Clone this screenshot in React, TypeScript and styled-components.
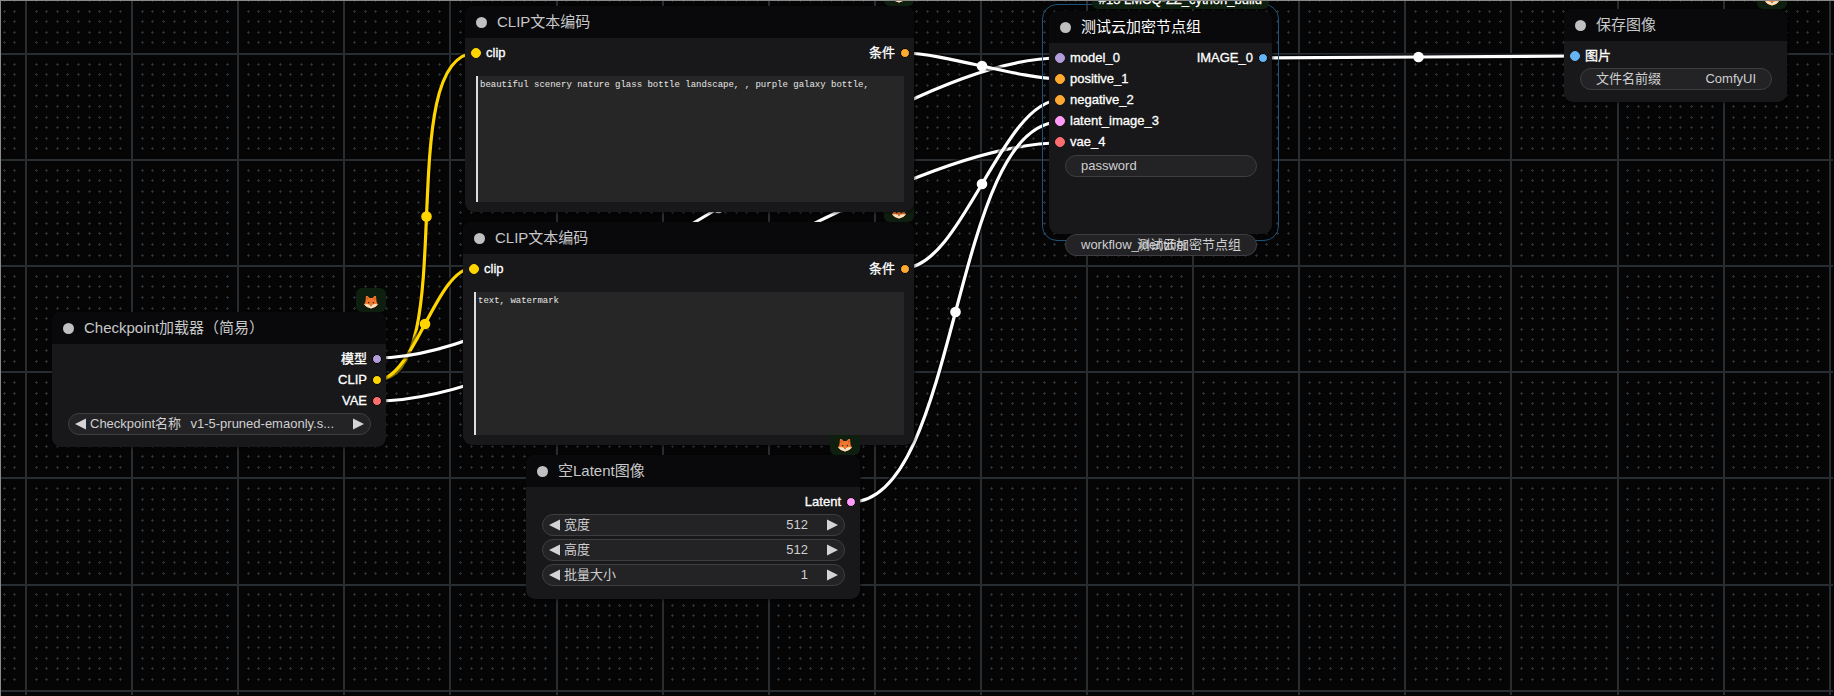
import React from 'react';
import styled, { createGlobalStyle } from 'styled-components';

const GlobalStyle = createGlobalStyle`
  * { box-sizing: border-box; }
  html, body, #root { height: 100%; margin: 0; }
  body {
    background: #050505;
    font-family: "Liberation Sans", "Noto Sans CJK SC", sans-serif;
    overflow: hidden;
  }
`;

const Canvas = styled.main`
  position: relative;
  width: 100%;
  min-height: 100vh;
  overflow: hidden;
  border-top: 1px solid #8a8a8a;
  border-left: 1px solid #8a8a8a;
`;

const Stage = styled.div`
  position: absolute;
  top: -1px;
  left: -1px;
`;

const Backdrop = styled.svg`
  position: absolute;
  top: -1px;
  left: -1px;
  width: 100%;
  height: 100%;
  box-sizing: content-box;
`;

const NodeFrame = styled.section<{ $x: number; $y: number; $w: number; $h: number }>`
  position: absolute;
  left: ${(p) => p.$x}px;
  top: ${(p) => p.$y}px;
  width: ${(p) => p.$w}px;
  height: ${(p) => p.$h}px;
  display: flex;
  flex-direction: column;
  border-radius: 9px;
  background: #18181a;
  box-shadow: 1px 1px 3px rgba(0, 0, 0, 0.6);
`;

const SelectionRing = styled.div`
  position: absolute;
  inset: -7px;
  border: 1px solid #1d5277;
  border-radius: 15px;
  pointer-events: none;
`;

const TitleBar = styled.header`
  position: relative;
  flex: none;
  height: 32px;
  display: flex;
  align-items: center;
  gap: 10px;
  padding-left: 11px;
  border-radius: 9px 9px 0 0;
  background: #09090b;
`;

const StateDot = styled.span`
  width: 11px;
  height: 11px;
  border-radius: 50%;
  background: #c0c0c0;
`;

const Title = styled.h2<{ $selected?: boolean }>`
  margin: 0;
  font-size: 15px;
  line-height: 20px;
  font-weight: 400;
  white-space: nowrap;
  color: ${(p) => (p.$selected ? '#ffffff' : '#c8c8ca')};
`;

const Badge = styled.span`
  position: absolute;
  right: 0;
  bottom: 100%;
  height: 24px;
  min-width: 30px;
  display: flex;
  align-items: center;
  justify-content: center;
  padding-top: 3px;
  border-radius: 6px;
  background: #0f1f0f;
`;

const BadgeText = styled(Badge)`
  right: 3px;
  bottom: 34px;
  padding: 6px 7px 0;
  font-size: 13px;
  line-height: 16px;
  white-space: nowrap;
  color: #ffffff;
  -webkit-text-stroke: 0.3px #ffffff;
`;

const Slots = styled.div`
  display: flex;
  justify-content: space-between;
  padding: 4px 4px 0 6px;
`;

const SlotColumn = styled.ul`
  margin: 0;
  padding: 0;
  list-style: none;
`;

const Slot = styled.li<{ $output?: boolean }>`
  height: 21px;
  display: flex;
  flex-direction: ${(p) => (p.$output ? 'row-reverse' : 'row')};
  align-items: center;
  gap: 5px;
  font-size: 13px;
  line-height: 16px;
  color: #ffffff;
  -webkit-text-stroke: 0.3px #ffffff;
  white-space: nowrap;
`;

const SlotDot = styled.span<{ $color: string; $output?: boolean }>`
  width: 10px;
  height: 10px;
  border: 1px solid ${(p) => (p.$output ? '#000000' : p.$color)};
  border-radius: 50%;
  background: ${(p) => p.$color};
`;

const Widgets = styled.div<{ $offset: number }>`
  display: flex;
  flex-direction: column;
  gap: 3px;
  padding: ${(p) => p.$offset}px 15px 0 16px;
`;

const Pill = styled.div<{ $tight?: boolean }>`
  position: relative;
  flex: none;
  height: 22px;
  display: flex;
  align-items: center;
  padding: 0 ${(p) => (p.$tight ? 6 : 15)}px;
  border: 1px solid #3d3d42;
  border-radius: 11px;
  background: #232325;
  font-size: 13px;
  line-height: 16px;
  color: #cfcfd1;
`;

const PillLabel = styled.label`
  flex: none;
  white-space: nowrap;
`;

const PillInput = styled.input<{ $wide?: boolean; $end?: number }>`
  flex: 1;
  min-width: 0;
  width: 0;
  margin: 0 ${(p) => p.$end ?? 0}px 0 ${(p) => (p.$wide ? 8 : 0)}px;
  padding: 0;
  border: 0;
  outline: 0;
  background: transparent;
  color: inherit;
  font: inherit;
  text-align: right;
`;

const OverlapInput = styled(PillInput)`
  position: absolute;
  right: 15px;
  width: 120px;
`;

const Arrow = styled.button`
  flex: none;
  display: flex;
  margin: 0;
  padding: 0;
  border: 0;
  background: transparent;
  color: #d4d4d6;
  &:first-child { margin-right: 4px; }
`;

const Spacer = styled.div`
  height: 51px;
`;

const Prompt = styled.textarea`
  flex: 1;
  position: relative;
  z-index: 10;
  margin: 13px 10px 10px 11px;
  padding: 4px 2px;
  border: 0;
  border-left: 2px solid #dddddd;
  outline: 0;
  resize: none;
  background: #262626;
  color: #e6e6e6;
  font-family: "Liberation Mono", "Noto Sans CJK SC", monospace;
  font-size: 9px;
  line-height: 11px;
`;

const Fox = () => (
  <svg width="14" height="14" viewBox="0 0 14 14" aria-hidden="true">
    <path d="M2 1h1.500L5.500 3h3l2-2H12l.6 6L14 9.500l-3 2.500L7 13.500 3 12 0 9.500 1.400 7z" fill="#f4772e" />
    <path d="M2.600 2 4.400 3.800 2.800 5zM11.400 2 9.600 3.800l1.600 1.200z" fill="#c9541f" />
    <path d="M0 9.500 3.500 9 6 10h2l2.500-1 3.500.5-3 2.500L7 13.500 3 12z" fill="#ffe2bd" />
    <path d="M4 7h1.300v1.300H4zM8.700 7H10v1.300H8.700zM6.100 10.300h1.800L7 11.600z" fill="#3a2418" />
  </svg>
);

const LeftArrow = ({ label }: { label: string }) => (
  <Arrow aria-label={label}>
    <svg width="11" height="12" viewBox="0 0 11 12"><path d="M11 .5v11L0 6z" fill="currentColor" /></svg>
  </Arrow>
);

const RightArrow = ({ label }: { label: string }) => (
  <Arrow aria-label={label}>
    <svg width="11" height="12" viewBox="0 0 11 12"><path d="M0 .5v11L11 6z" fill="currentColor" /></svg>
  </Arrow>
);

const COLORS = {
  model: '#b39ddb',
  clip: '#ffd500',
  vae: '#ff6e6e',
  cond: '#ffa931',
  latent: '#ff9cf9',
  image: '#64b5f6',
};

type SlotDef = { name: string; color: string };

const SlotRows = ({ inputs = [], outputs = [] }: { inputs?: SlotDef[]; outputs?: SlotDef[] }) => (
  <Slots>
    <SlotColumn>
      {inputs.map((s) => (
        <Slot key={s.name}><SlotDot $color={s.color} />{s.name}</Slot>
      ))}
    </SlotColumn>
    <SlotColumn>
      {outputs.map((s) => (
        <Slot key={s.name} $output><SlotDot $color={s.color} $output />{s.name}</Slot>
      ))}
    </SlotColumn>
  </Slots>
);

type NodeProps = {
  title: string;
  x: number;
  y: number;
  w: number;
  h: number;
  selected?: boolean;
  badge?: React.ReactNode;
  children: React.ReactNode;
};

const GraphNode = ({ title, x, y, w, h, selected, badge, children }: NodeProps) => (
  <NodeFrame $x={x} $y={y} $w={w} $h={h}>
    {selected && <SelectionRing />}
    <TitleBar>
      <StateDot />
      <Title $selected={selected}>{title}</Title>
      {badge ?? <Badge><Fox /></Badge>}
    </TitleBar>
    {children}
  </NodeFrame>
);

const NumberWidget = ({ id, label, value }: { id: string; label: string; value: string }) => (
  <Pill $tight>
    <LeftArrow label={`${label} -`} />
    <PillLabel htmlFor={id}>{label}</PillLabel>
    <PillInput id={id} defaultValue={value} $end={19} />
    <RightArrow label={`${label} +`} />
  </Pill>
);

/* Background grid: ten dots to a cell, ten cells to a repeating tile. */
const TILE = 1061;
const major = Array.from({ length: 10 }, (_, i) => Math.round((i * TILE) / 10));
const minor = Array.from({ length: 100 }, (_, i) => Math.round((i * TILE) / 100));
const gridLines = major.map((p) => `M${p} 0h2v${TILE}h-2zM0 ${p}h${TILE}v2H0z`).join('');
const gridDots = minor
  .filter((_, i) => i % 10)
  .map((x) =>
    minor.filter((_, j) => j % 10).map((y) => `M${x - 1} ${y}h3v1h-3zM${x} ${y - 1}h1v3h-1z`).join(''),
  )
  .join('');

type Link = { from: [number, number]; to: [number, number]; color: string };

const LINKS: Link[] = [
  { from: [377, 380], to: [476, 53], color: '#ffd500' },
  { from: [377, 380], to: [473, 268], color: '#ffd500' },
  { from: [377, 358], to: [1060, 58], color: '#ffffff' },
  { from: [377, 401], to: [1060, 143], color: '#ffffff' },
  { from: [904, 53], to: [1060, 79], color: '#ffffff' },
  { from: [904, 268], to: [1060, 100], color: '#ffffff' },
  { from: [851, 502], to: [1060, 122], color: '#ffffff' },
  { from: [1262, 58], to: [1575, 56], color: '#ffffff' },
];

const LinkPath = ({ from, to, color }: Link) => {
  const reach = Math.hypot(to[0] - from[0], to[1] - from[1]) / 4;
  const d = `M${from[0]} ${from[1]}C${from[0] + reach} ${from[1]} ${to[0] - reach} ${to[1]} ${to[0]} ${to[1]}`;
  return (
    <g fill="none">
      <path d={d} stroke="#000000" strokeOpacity="0.5" strokeWidth="7" />
      <path d={d} stroke={color} strokeWidth="3.2" />
      <circle cx={(from[0] + to[0]) / 2} cy={(from[1] + to[1]) / 2} r="5.3" fill={color} />
    </g>
  );
};

export default function App() {
  return (
    <>
      <GlobalStyle />
      <Canvas>
        <Backdrop aria-hidden="true">
          <defs>
            <pattern id="grid" x="25" y="53" width={TILE} height={TILE} patternUnits="userSpaceOnUse">
              <path d={gridDots} fill="#2a2f33" shapeRendering="crispEdges" />
              <path d={gridLines} fill="#282d32" shapeRendering="crispEdges" />
            </pattern>
          </defs>
          <rect width="100%" height="100%" fill="url(#grid)" />
          {LINKS.map((link, i) => <LinkPath key={i} {...link} />)}
        </Backdrop>
        <Stage>
          <GraphNode title="Checkpoint加载器（简易）" x={52} y={312} w={334} h={135}>
            <SlotRows
              outputs={[
                { name: '模型', color: COLORS.model },
                { name: 'CLIP', color: COLORS.clip },
                { name: 'VAE', color: COLORS.vae },
              ]}
            />
            <Widgets $offset={2}>
              <Pill $tight>
                <LeftArrow label="上一个" />
                <PillLabel htmlFor="ckpt">Checkpoint名称</PillLabel>
                <PillInput id="ckpt" defaultValue="v1-5-pruned-emaonly.s..." $wide $end={19} />
                <RightArrow label="下一个" />
              </Pill>
            </Widgets>
          </GraphNode>

          <GraphNode title="CLIP文本编码" x={463} y={222} w={451} h={223}>
            <SlotRows
              inputs={[{ name: 'clip', color: COLORS.clip }]}
              outputs={[{ name: '条件', color: COLORS.cond }]}
            />
            <Prompt aria-label="负面提示词" spellCheck={false} defaultValue="text, watermark" />
          </GraphNode>

          <GraphNode title="CLIP文本编码" x={465} y={6} w={449} h={206}>
            <SlotRows
              inputs={[{ name: 'clip', color: COLORS.clip }]}
              outputs={[{ name: '条件', color: COLORS.cond }]}
            />
            <Prompt
              aria-label="正面提示词"
              spellCheck={false}
              defaultValue="beautiful scenery nature glass bottle landscape, , purple galaxy bottle,"
            />
          </GraphNode>

          <GraphNode title="空Latent图像" x={526} y={455} w={334} h={144}>
            <SlotRows outputs={[{ name: 'Latent', color: COLORS.latent }]} />
            <Widgets $offset={2}>
              <NumberWidget id="width" label="宽度" value="512" />
              <NumberWidget id="height" label="高度" value="512" />
              <NumberWidget id="batch" label="批量大小" value="1" />
            </Widgets>
          </GraphNode>

          <GraphNode
            title="测试云加密节点组"
            x={1049}
            y={11}
            w={223}
            h={223}
            selected
            badge={<BadgeText>#15 LMCQ-ZZ_cython_build</BadgeText>}
          >
            <SlotRows
              inputs={[
                { name: 'model_0', color: COLORS.model },
                { name: 'positive_1', color: COLORS.cond },
                { name: 'negative_2', color: COLORS.cond },
                { name: 'latent_image_3', color: COLORS.latent },
                { name: 'vae_4', color: COLORS.vae },
              ]}
              outputs={[{ name: 'IMAGE_0', color: COLORS.image }]}
            />
            <Widgets $offset={3}>
              <Pill>
                <PillLabel htmlFor="password">password</PillLabel>
                <PillInput id="password" defaultValue="" />
              </Pill>
              <Spacer />
              <Pill>
                <PillLabel htmlFor="workflow">workflow_identifier</PillLabel>
                <OverlapInput id="workflow" defaultValue="测试云加密节点组" />
              </Pill>
            </Widgets>
          </GraphNode>

          <GraphNode title="保存图像" x={1564} y={9} w={223} h={93}>
            <SlotRows inputs={[{ name: '图片', color: COLORS.image }]} />
            <Widgets $offset={2}>
              <Pill>
                <PillLabel htmlFor="prefix">文件名前缀</PillLabel>
                <PillInput id="prefix" defaultValue="ComfyUI" />
              </Pill>
            </Widgets>
          </GraphNode>
        </Stage>
      </Canvas>
    </>
  );
}
